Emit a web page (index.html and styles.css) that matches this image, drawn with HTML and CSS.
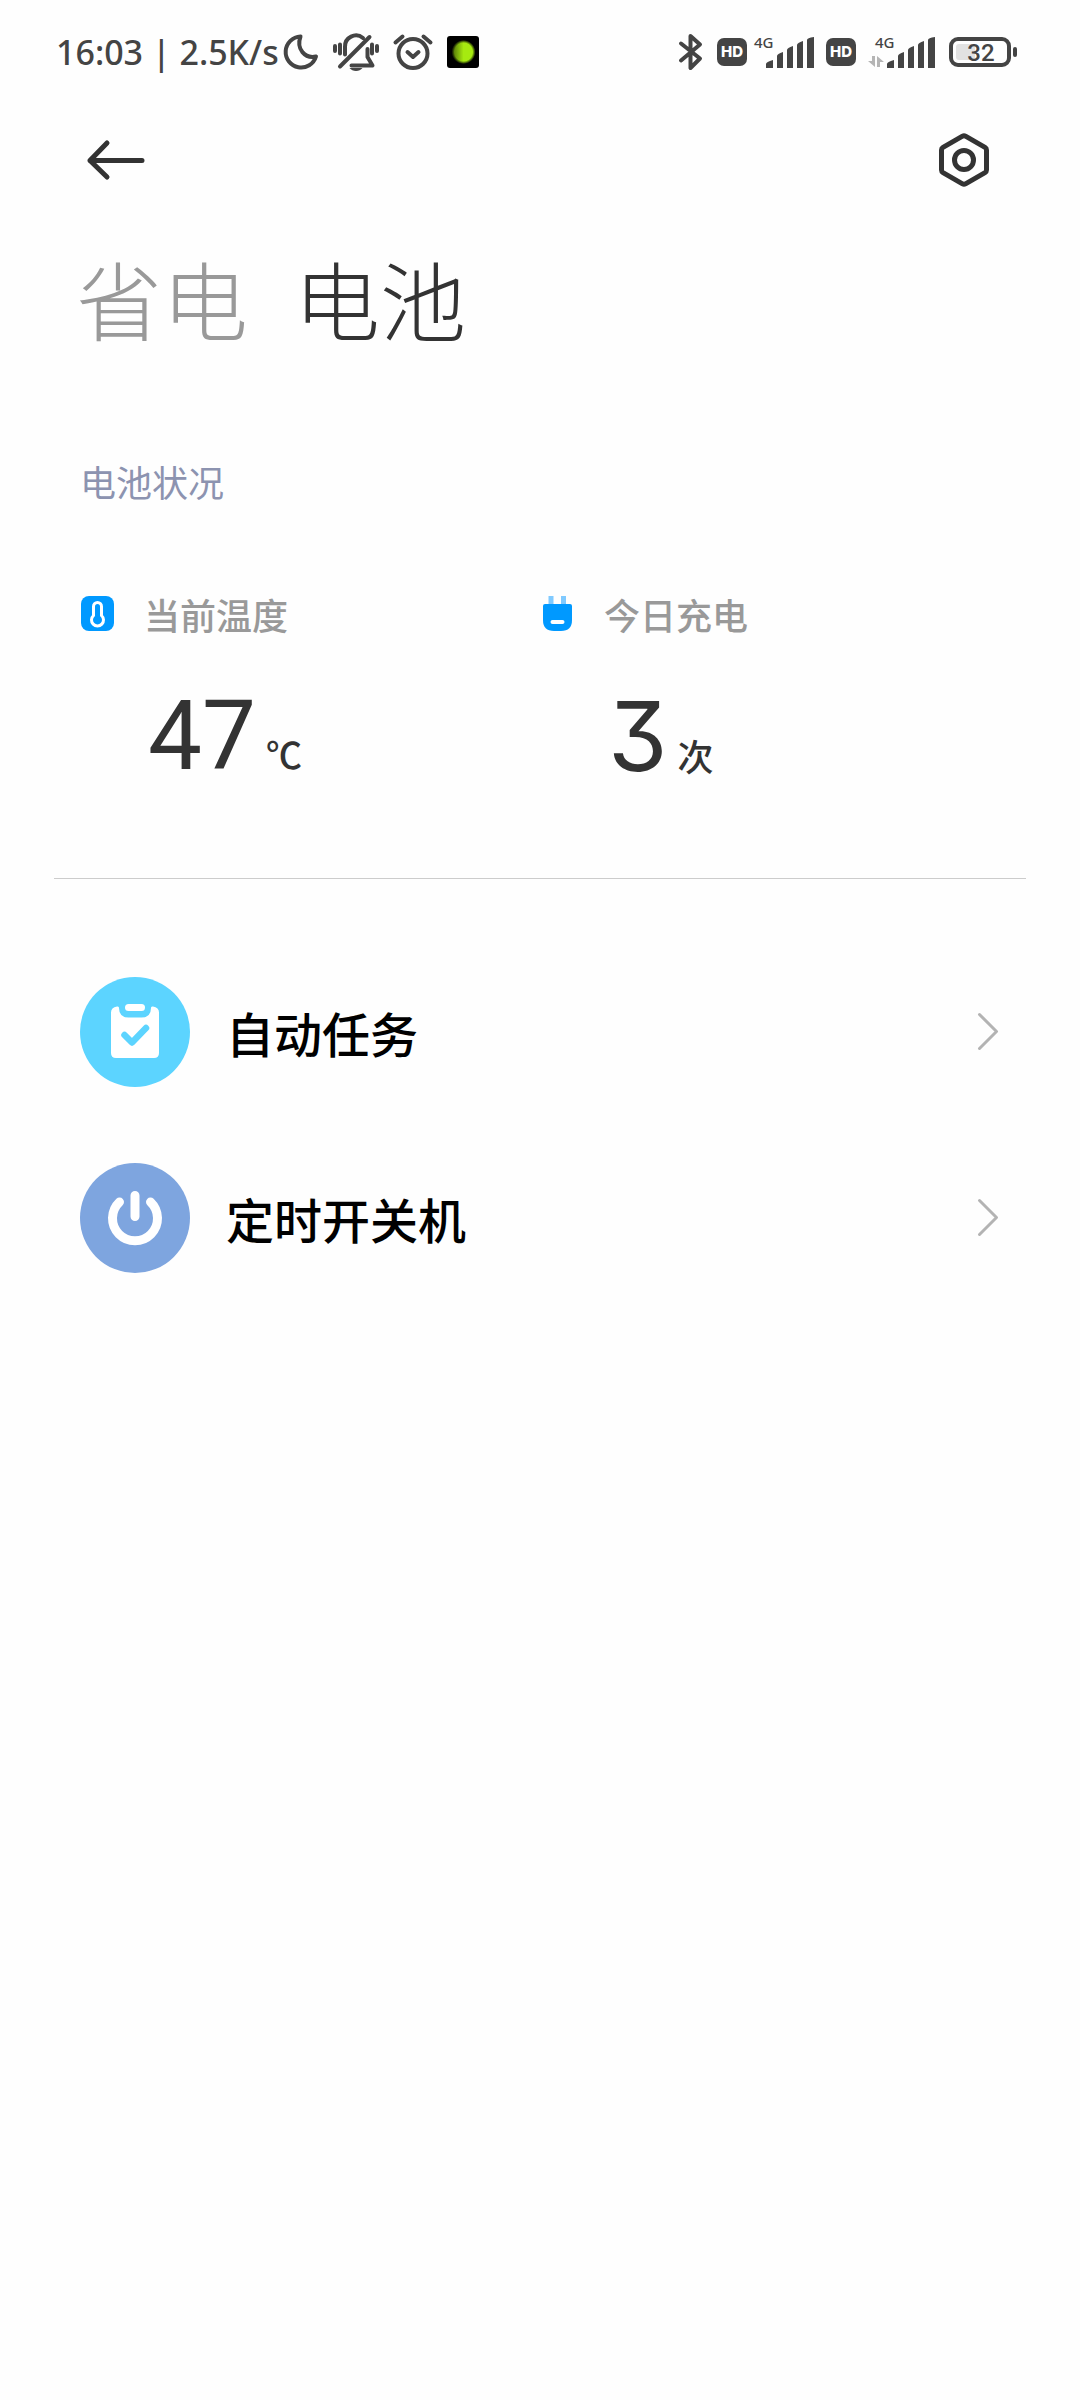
FILE: index.html
```html
<!DOCTYPE html>
<html lang="zh-CN">
<head>
<meta charset="utf-8">
<meta name="viewport" content="width=device-width, initial-scale=1">
<title>电池</title>
<link rel="stylesheet" href="styles.css">
</head>
<body>
<div class="status">
  <span class="status-text">16:03 | 2.5K/s</span>
  <div class="status-notes">
    <svg width="36" height="40" viewBox="0 0 36 40" class="line"><path d="M17.500 4.500A15.500 15.500 0 1 0 33 24.500C22 27 13 17 17.500 4.500Z"/></svg>
    <svg width="46" height="40" viewBox="0 0 46 40" class="line"><path d="M12 22.500V15a11 11 0 0 1 18-9M34.500 17v8l5 8.500H18.500M7 34.500L36.500 5M2 14v5M7 12.500v9M39 12.500v9M44 14v5"/><path class="solid" d="M16.500 36h13q-2.500 3-6.500 3t-6.500-3z"/></svg>
    <svg width="40" height="40" viewBox="0 0 40 40" class="line"><circle cx="20" cy="21.500" r="14.500"/><path d="M14.500 20l5.500 5 5.500-5M2.500 10.500l7-6M37.500 10.500l-7-6"/></svg>
    <svg width="32" height="40" viewBox="0 0 32 40"><defs><radialGradient id="glow"><stop offset=".75" stop-color="#a6ea10"/><stop offset="1" stop-color="#a6ea10" stop-opacity="0"/></radialGradient><linearGradient id="shade"><stop offset="0" stop-color="#000" stop-opacity=".55"/><stop offset=".5" stop-color="#000" stop-opacity="0"/></linearGradient></defs><rect y="4" width="32" height="32" rx="3"/><circle cx="16.500" cy="20" r="12" fill="url(#glow)"/><circle cx="16.500" cy="20" r="12" fill="url(#shade)"/></svg>
  </div>
  <div class="status-radio">
    <svg class="line gap-l" width="24" height="40" viewBox="0 0 24 40"><path d="M2 11.500l19 15-9.500 9.500V4L21 12.500 2 28.500"/></svg>
    <svg class="gap-s" width="30" height="40" viewBox="0 0 30 40"><rect y="6" width="30" height="28" rx="7" fill="#444"/><text class="hd" x="15" y="25" text-anchor="middle">HD</text></svg>
    <svg class="gap-m" width="60" height="40" viewBox="0 0 60 40"><text class="net" x="0" y="16">4G</text><path class="solid" d="M12 36v-4q0-2 7-4v8zM23 36V24q0-2 6-4v16zM33 36V18q0-2 6-4v22zM43 36V13q0-2 6-4v27zM53 36V8q0-2 7-3v31z"/></svg>
    <svg class="gap-m" width="30" height="40" viewBox="0 0 30 40"><rect y="6" width="30" height="28" rx="7" fill="#444"/><text class="hd" x="15" y="25" text-anchor="middle">HD</text></svg>
    <svg class="gap-l" width="67" height="40" viewBox="0 0 67 40"><text class="net" x="7" y="16">4G</text><path fill="#b5b5b5" d="M4 24h3v11L0 29h4zM9 35V24l7 6h-4v5z"/><path class="solid" d="M19 36v-4q0-2 7-4v8zM30 36V24q0-2 6-4v16zM40 36V18q0-2 6-4v22zM50 36V13q0-2 6-4v27zM60 36V8q0-2 7-3v31z"/></svg>
    <svg width="68" height="40" viewBox="0 0 68 40"><rect x="7" y="12" width="19" height="16" rx="3" fill="#e2e2e2"/><rect x="2" y="7" width="58" height="26" rx="7" fill="none" stroke="#444" stroke-width="4"/><rect x="64" y="15" width="4" height="10" rx="2" fill="#444"/><text class="level" x="32" y="29" text-anchor="middle">32</text></svg>
  </div>
</div>
<header class="bar">
  <button class="icon-button" type="button" aria-label="返回"><svg width="60" height="60" viewBox="0 0 60 60"><path d="M21 13L4 30.500 21 47M4 30.500H56"/></svg></button>
  <button class="icon-button" type="button" aria-label="设置"><svg width="60" height="60" viewBox="0 0 60 60"><path d="M31.500 6.200L51 17.300Q52.500 18.200 52.500 19.900V40.100Q52.500 41.800 51 42.700L31.500 53.800Q30 54.600 28.500 53.800L9 42.700Q7.500 41.800 7.500 40.100V19.900Q7.500 18.200 9 17.300L28.500 6.200Q30 5.400 31.500 6.200Z"/><circle cx="30" cy="30" r="9.500"/></svg></button>
</header>
<nav class="tabs">
  <button class="tab" type="button">省电</button>
  <button class="tab active" type="button" aria-current="page">电池</button>
</nav>
<main>
  <section class="health">
    <h2>电池状况</h2>
    <div class="stats">
      <div class="stat">
        <svg width="34" height="36" viewBox="0 0 34 36"><rect x="1" width="33" height="35" rx="8" fill="#09f"/><path d="M13.500 19.500V10.500a4 4 0 0 1 8 0v9a6 6 0 1 1-8 0z" fill="none" stroke="#fff" stroke-width="3"/></svg>
        <span class="label">当前温度</span>
        <p class="value"><span class="number">47</span><span class="unit">℃</span></p>
      </div>
      <div class="stat">
        <svg width="34" height="36" viewBox="0 0 34 36"><path fill="#80caff" d="M8.500 0h5v9h-5zM21 0h5v9h-5z"/><path fill="#09f" d="M5 8h25q2 0 2 2v14q0 11-11 11h-7Q3 35 3 24V10q0-2 2-2z"/><rect x="10.500" y="24" width="14" height="4" rx="2" fill="#fff"/></svg>
        <span class="label">今日充电</span>
        <p class="value"><span class="number flat">3</span><span class="unit">次</span></p>
      </div>
    </div>
  </section>
  <ul class="links">
    <li><a href="#tasks">
      <svg width="110" height="110" viewBox="0 0 110 110"><circle cx="55" cy="55" r="55" fill="#5cd4ff"/><path fill="#fff" d="M37 29.500a1.500 1.500 0 0 1 2 1.500q0 9.500 9.500 9.500h13Q71 40.500 71 31a1.500 1.500 0 0 1 2-1.500q6 1 6 6V76q0 5-5 5H36q-5 0-5-5V35.500q0-5 6-6z"/><rect x="45" y="27" width="20" height="7" rx="3.500" fill="#fff"/><path d="M44.500 58l7.500 7.500L66 51" fill="none" stroke="#5cd4ff" stroke-width="6.500" stroke-linecap="round" stroke-linejoin="round"/></svg>
      <span class="link-name">自动任务</span>
      <svg class="chevron" width="22" height="40" viewBox="0 0 22 40"><path d="M1.500 2.500l17 17-17 17"/></svg>
    </a></li>
    <li><a href="#schedule">
      <svg width="110" height="110" viewBox="0 0 110 110"><circle cx="55" cy="55" r="55" fill="#7ea5df"/><path d="M39.500 39a22.500 22.500 0 1 0 31 0M55 32.500v21" fill="none" stroke="#fff" stroke-width="9" stroke-linecap="round"/></svg>
      <span class="link-name">定时开关机</span>
      <svg class="chevron" width="22" height="40" viewBox="0 0 22 40"><path d="M1.500 2.500l17 17-17 17"/></svg>
    </a></li>
  </ul>
</main>
</body>
</html>
```
FILE: styles.css
```css
* { box-sizing: border-box; }
body {
  margin: 0;
  background: #fefefe;
  color: #333;
  font-family: "Noto Sans CJK SC", sans-serif;
}
svg { display: block; flex: none; overflow: visible; }
button { padding: 0; border: 0; background: none; color: inherit; font: inherit; cursor: pointer; }
h2, p, ul { margin: 0; padding: 0; }

.status {
  display: flex;
  align-items: center;
  height: 104px;
  padding: 0 63px 0 56px;
  color: #444;
}
.status-text { font-family: "Noto Sans", sans-serif; font-size: 34px; font-weight: 500; line-height: 40px; white-space: nowrap; }
.status-notes { display: flex; gap: 14px; margin-left: 4px; }
.status-radio { display: flex; margin-left: auto; }
.gap-s { margin-right: 7px; }
.gap-m { margin-right: 12px; }
.gap-l { margin-right: 14px; }
.line { fill: none; stroke: #444; stroke-width: 4; stroke-linecap: round; stroke-linejoin: round; }
.solid { fill: #444; stroke: none; }
.hd { fill: #fff; font: 800 15px Inter, sans-serif; }
.net { fill: #444; font: 500 15px "Noto Sans", sans-serif; }
.level { fill: #444; font: 500 24px Roboto, sans-serif; }

.bar {
  display: flex;
  align-items: center;
  justify-content: space-between;
  height: 112px;
  padding: 0 86px;
}
.icon-button svg { fill: none; stroke: #333; stroke-width: 5; stroke-linecap: round; stroke-linejoin: round; }

.tabs { display: flex; gap: 46px; margin-top: 38px; padding: 0 76px; }
.tab { color: #999; font-size: 86px; font-weight: 300; line-height: 88px; }
.tab.active { color: #333; }

.health { margin: 119px 54px 0; padding: 0 26px 92px; border-bottom: 1px solid #ccc; }
.health h2 { color: #8c93b0; font-size: 36px; font-weight: 400; line-height: 40px; }
.stats { display: grid; grid-template-columns: 1fr 1fr; margin-top: 93px; }
.stat { display: grid; grid-template-columns: 34px 1fr; column-gap: 30px; align-items: center; }
.label { color: #999; font-size: 36px; font-weight: 500; line-height: 40px; }
.value { grid-column: 2; display: flex; align-items: baseline; gap: 10px; margin-top: 52px; padding-left: 4px; }
.number { font-family: Roboto, sans-serif; font-size: 96px; line-height: 100px; }
.flat { font-family: Inter, sans-serif; font-feature-settings: "cv09"; }
.unit { font-size: 36px; font-weight: 500; line-height: 40px; }

.links { display: grid; gap: 76px; padding: 98px 80px; list-style: none; }
.links a { display: flex; align-items: center; color: #000; text-decoration: none; }
.link-name { flex: 1; margin-left: 36px; font-size: 48px; font-weight: 500; line-height: 56px; }
.chevron { fill: none; stroke: #b3b3b3; stroke-width: 3; stroke-linecap: round; stroke-linejoin: round; }
```
